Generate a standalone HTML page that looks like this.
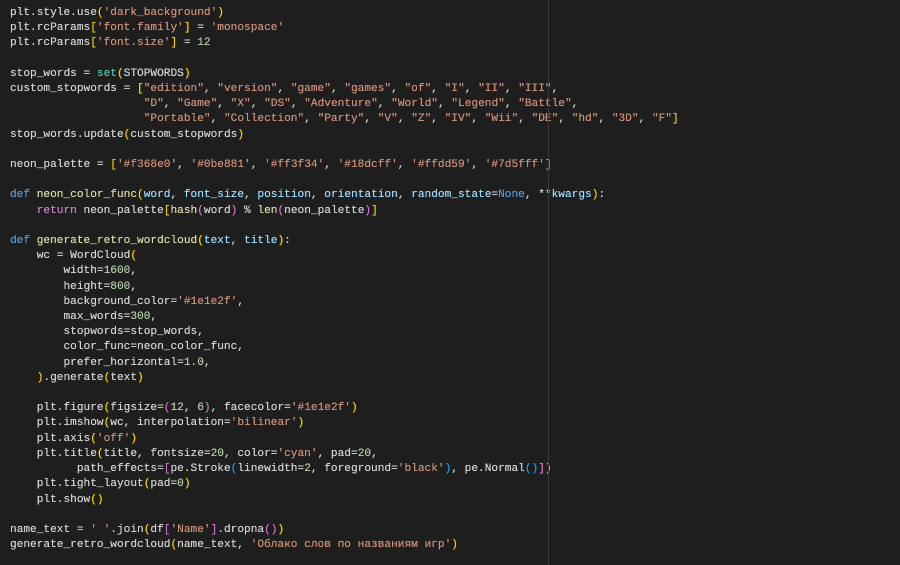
<!DOCTYPE html>
<html><head><meta charset="utf-8"><style>
html,body{margin:0;padding:0;background:#1e1e1e;width:900px;height:565px;overflow:hidden}
pre{margin:0;padding:6px 0 0 10px;font-family:"Liberation Mono",monospace;font-size:11.15px;line-height:15.2px;color:#d4d4d4;white-space:pre;text-shadow:0 0 0.4px currentColor}
.s{color:#ce9178}.n{color:#b5cea8}.k{color:#569cd6}.f{color:#dcdcaa}.p{color:#9cdcfe}.r{color:#c586c0}.c{color:#4ec9b0}
.b1{color:#ffd700}.b2{color:#da70d6}.b3{color:#179fff}
.vl{position:absolute;left:548px;top:0;width:1px;height:565px;background:#3a3a3a}
</style></head><body>
<div class="vl"></div>
<pre>plt.style.use<span class="b1">(</span><span class="s">'dark_background'</span><span class="b1">)</span>
plt.rcParams<span class="b1">[</span><span class="s">'font.family'</span><span class="b1">]</span> = <span class="s">'monospace'</span>
plt.rcParams<span class="b1">[</span><span class="s">'font.size'</span><span class="b1">]</span> = <span class="n">12</span>

stop_words = <span class="c">set</span><span class="b1">(</span>STOPWORDS<span class="b1">)</span>
custom_stopwords = <span class="b1">[</span><span class="s">"edition"</span>, <span class="s">"version"</span>, <span class="s">"game"</span>, <span class="s">"games"</span>, <span class="s">"of"</span>, <span class="s">"I"</span>, <span class="s">"II"</span>, <span class="s">"III"</span>,
                    <span class="s">"D"</span>, <span class="s">"Game"</span>, <span class="s">"X"</span>, <span class="s">"DS"</span>, <span class="s">"Adventure"</span>, <span class="s">"World"</span>, <span class="s">"Legend"</span>, <span class="s">"Battle"</span>,
                    <span class="s">"Portable"</span>, <span class="s">"Collection"</span>, <span class="s">"Party"</span>, <span class="s">"V"</span>, <span class="s">"Z"</span>, <span class="s">"IV"</span>, <span class="s">"Wii"</span>, <span class="s">"DE"</span>, <span class="s">"hd"</span>, <span class="s">"3D"</span>, <span class="s">"F"</span><span class="b1">]</span>
stop_words.update<span class="b1">(</span>custom_stopwords<span class="b1">)</span>

neon_palette = <span class="b1">[</span><span class="s">'#f368e0'</span>, <span class="s">'#0be881'</span>, <span class="s">'#ff3f34'</span>, <span class="s">'#18dcff'</span>, <span class="s">'#ffdd59'</span>, <span class="s">'#7d5fff'</span><span class="b1">]</span>

<span class="k">def</span> <span class="f">neon_color_func</span><span class="b1">(</span><span class="p">word</span>, <span class="p">font_size</span>, <span class="p">position</span>, <span class="p">orientation</span>, <span class="p">random_state</span>=<span class="k">None</span>, **<span class="p">kwargs</span><span class="b1">)</span>:
    <span class="r">return</span> neon_palette<span class="b1">[</span><span class="f">hash</span><span class="b2">(</span>word<span class="b2">)</span> % <span class="f">len</span><span class="b2">(</span>neon_palette<span class="b2">)</span><span class="b1">]</span>

<span class="k">def</span> <span class="f">generate_retro_wordcloud</span><span class="b1">(</span><span class="p">text</span>, <span class="p">title</span><span class="b1">)</span>:
    wc = WordCloud<span class="b1">(</span>
        width=<span class="n">1600</span>,
        height=<span class="n">800</span>,
        background_color=<span class="s">'#1e1e2f'</span>,
        max_words=<span class="n">300</span>,
        stopwords=stop_words,
        color_func=neon_color_func,
        prefer_horizontal=<span class="n">1.0</span>,
    <span class="b1">)</span>.generate<span class="b1">(</span>text<span class="b1">)</span>

    plt.figure<span class="b1">(</span>figsize=<span class="b2">(</span><span class="n">12</span>, <span class="n">6</span><span class="b2">)</span>, facecolor=<span class="s">'#1e1e2f'</span><span class="b1">)</span>
    plt.imshow<span class="b1">(</span>wc, interpolation=<span class="s">'bilinear'</span><span class="b1">)</span>
    plt.axis<span class="b1">(</span><span class="s">'off'</span><span class="b1">)</span>
    plt.title<span class="b1">(</span>title, fontsize=<span class="n">20</span>, color=<span class="s">'cyan'</span>, pad=<span class="n">20</span>,
          path_effects=<span class="b2">[</span>pe.Stroke<span class="b3">(</span>linewidth=<span class="n">2</span>, foreground=<span class="s">'black'</span><span class="b3">)</span>, pe.Normal<span class="b3">()</span><span class="b2">]</span><span class="b1">)</span>
    plt.tight_layout<span class="b1">(</span>pad=<span class="n">0</span><span class="b1">)</span>
    plt.show<span class="b1">()</span>

name_text = <span class="s">' '</span>.join<span class="b1">(</span>df<span class="b2">[</span><span class="s">'Name'</span><span class="b2">]</span>.dropna<span class="b2">()</span><span class="b1">)</span>
generate_retro_wordcloud<span class="b1">(</span>name_text, <span class="s">'Облако слов по названиям игр'</span><span class="b1">)</span></pre>
</body></html>
